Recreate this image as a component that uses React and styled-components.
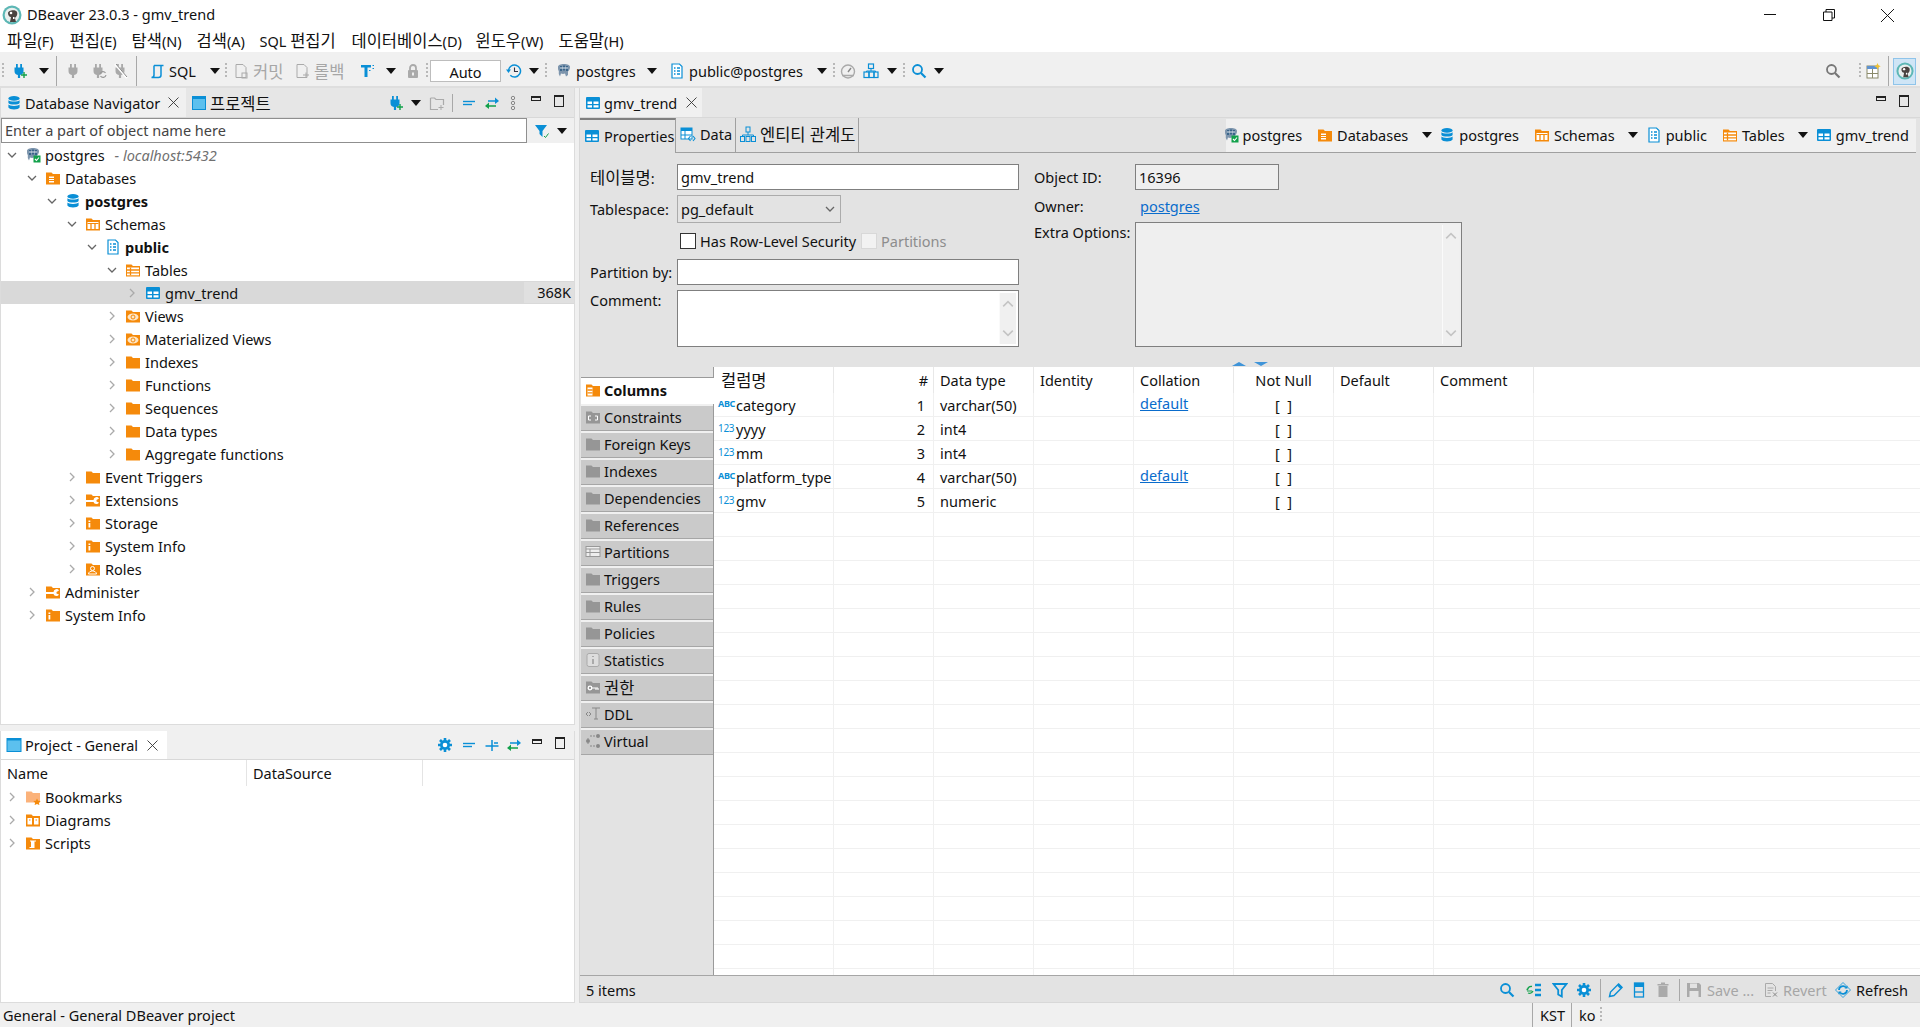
import React from "react";
import styled, { createGlobalStyle } from "styled-components";

const GlobalStyle = createGlobalStyle`
  html, body { margin: 0; padding: 0; background: #f0f0f0; }
  * { box-sizing: border-box; }
  body {
    font-family: "Noto Sans", "Noto Sans CJK KR", sans-serif;
    font-size: 14.5px;
    color: #111;
  }
`;

const BLUE = "#0a8fd6";
const ORANGE = "#f58a0b";
const GRAY = "#a9a9a9";
const GREEN = "#12a14b";

const folder = (c = ORANGE) => <path d="M1 2.5h5.5L8 4h7v10.5H1z" fill={c} />;

const stack = (c) => (
  <g fill={c}>
    <ellipse cx="8" cy="3.4" rx="5.6" ry="2.4" />
    <path d="M2.4 5.3c1 1.6 10.2 1.6 11.2 0v2.6c-1 2-10.2 2-11.2 0z" />
    <path d="M2.4 9.6c1 1.8 10.2 1.8 11.2 0v3c-1 2.6-10.2 2.6-11.2 0z" />
  </g>
);

const plug = (c) => (
  <g fill={c}>
    <rect x="4" y="1" width="1.8" height="4" />
    <rect x="8.2" y="1" width="1.8" height="4" />
    <path d="M2.5 4.5h9v3.5a4 4 0 0 1-3.4 4V15H5.9v-3a4 4 0 0 1-3.4-4z" />
  </g>
);

const elephant = (
  <g>
    <path d="M2 4c0-2 2.5-3 6-3s6 1 6 3-1 4-2 4.500V12l-2 1.500-1-3-2 .5-2-.5-1 3L2.800 11V8C2 7 2 5.500 2 4z" fill="#7d95ad" />
    <path d="M5 3v5M8 2.500v5M11 3v5" stroke="#25567f" strokeWidth="1.500" />
    <path d="M4 5h8" stroke="#e6edf3" strokeWidth="1" />
  </g>
);

const ICONS = {
  plugPlus: <>{plug(BLUE)}<path d="M12 9v6M9 12h6" stroke={GREEN} strokeWidth="1.4" /></>,
  grayPlug: plug(GRAY),
  recyclePlug: <>{plug(GRAY)}<path d="M9 11a3 3 0 0 1 5.500-1M15 12a3 3 0 0 1-5.500 1" stroke="#999" strokeWidth="1.200" fill="none" /></>,
  noPlug: <>{plug(GRAY)}<path d="M2 1l12 14" stroke="#fff" strokeWidth="2" /><path d="M3 1l11 13" stroke="#888" strokeWidth="1" /></>,
  sqlDoc: <path d="M5 2.500h9.500M12 2.500V12a2.500 2.500 0 0 1-2.500 2.500H2.500M5 2.500V12a2.500 2.500 0 0 1-2.500 2.500" stroke={BLUE} strokeWidth="1.500" fill="none" />,
  commit: <><path d="M3 1.500h7l3 3V14.500H3z" fill="none" stroke="#aaa" /><rect x="9" y="10" width="5" height="5" fill="none" stroke="#aaa" /></>,
  rollback: <><path d="M3 1.500h7l3 3V14.500H3z" fill="none" stroke="#aaa" /><path d="M9 12h6M12 9.500V15" stroke="#aaa" /></>,
  tType: <><path d="M1 2h10v2.500H7.500V14H4.500V4.500H1z" fill={BLUE} /><path d="M12.500 2.500h1.500M12.500 5.500h1.500M9 7.500h1.500" stroke={BLUE} strokeWidth="1.200" /></>,
  lock: <><path d="M5 7V5a3 3 0 0 1 6 0v2" fill="none" stroke="#aaa" strokeWidth="1.800" /><rect x="3" y="7" width="10" height="8" rx="1" fill="#aaa" /><rect x="7" y="9.500" width="2" height="3" fill="#eee" /></>,
  history: <><path d="M2.500 8a6 6 0 1 1 1.800 4.300" fill="none" stroke={BLUE} strokeWidth="1.500" /><path d="M0 6.500h5L2.500 10z" fill={BLUE} /><path d="M8.500 4.500V8.500H12" fill="none" stroke="#334" strokeWidth="1.100" /></>,
  pg: elephant,
  pgOk: <>{elephant}<rect x="8.500" y="8.500" width="7" height="7" fill={GREEN} /><path d="M10 12l1.500 1.500 2.500-3" stroke="#fff" strokeWidth="1.100" fill="none" /></>,
  doc: <><path d="M3 1h7.500L13 3.500V15H3z" fill="#fff" stroke={BLUE} strokeWidth="1.200" /><path d="M5 5h1.500M8 5h3M5 8h1.500M8 8h3M5 11h1.500M8 11h3" stroke={BLUE} strokeWidth="1.300" /></>,
  gauge: <><circle cx="8" cy="8.500" r="6.500" fill="none" stroke="#aaa" strokeWidth="1.400" /><path d="M8 9l3-4" stroke="#888" strokeWidth="1.400" /><path d="M2 12.500h12" stroke="#aaa" strokeWidth="1.500" /></>,
  dist: <><rect x="5.500" y="1" width="5" height="4.500" fill="none" stroke={BLUE} strokeWidth="1.200" /><path d="M8 5.500V8M3.500 9V8h9v1" fill="none" stroke={BLUE} /><rect x="1" y="9" width="5" height="5.500" fill="none" stroke={BLUE} strokeWidth="1.200" /><rect x="6" y="9" width="5" height="5.500" fill="none" stroke={BLUE} strokeWidth="1.200" /><rect x="11" y="9" width="4" height="5.500" fill="none" stroke={BLUE} strokeWidth="1.200" /></>,
  searchBlue: <><circle cx="6.500" cy="6.500" r="4.500" fill="none" stroke={BLUE} strokeWidth="1.800" /><path d="M10 10l4.500 4.500" stroke={BLUE} strokeWidth="2.200" /></>,
  searchGray: <><circle cx="6.500" cy="6.500" r="4.500" fill="none" stroke="#777" strokeWidth="1.800" /><path d="M10 10l4.500 4.500" stroke="#777" strokeWidth="2.200" /></>,
  perspective: <><rect x="2" y="3" width="11" height="12" fill="#fff" stroke="#8a8a6a" /><rect x="2" y="3" width="11" height="3" fill="#5f92cf" /><path d="M7.500 6v9M2 10.500h11" stroke="#8a8a6a" /><path d="M12.500 0l1 2.200 2.200 1-2.200 1-1 2.200-1-2.200-2.200-1 2.200-1z" fill="#f2c230" /></>,
  dbNav: stack(BLUE),
  folderPanel: <><rect x="1.500" y="1.500" width="13" height="13" fill="#5cc0ee" stroke={BLUE} /><rect x="1" y="1" width="14" height="3" fill={BLUE} /></>,
  projectTab: <><rect x="1" y="1.500" width="14" height="13" fill="#5cc0ee" stroke={BLUE} /><rect x="1" y="1" width="14" height="2.500" fill={BLUE} /></>,
  folderPlus: <><path d="M1.500 3h4L7 4.500h7.500V10M9 14.500H1.500V3" fill="none" stroke="#aaa" strokeWidth="1.200" /><path d="M12 10v5M9.500 12.500h5" stroke="#aaa" /></>,
  collapse: <><path d="M2 6.500h12" stroke={BLUE} strokeWidth="1.400" /><path d="M2 9.500h9" stroke={BLUE} strokeWidth="1.400" /></>,
  expand: <path d="M1.500 9h13M8 3v11M10 6h4" stroke={BLUE} strokeWidth="1.500" fill="none" />,
  linkArrows: <><path d="M4 6h8" stroke={BLUE} strokeWidth="1.500" /><path d="M11 2.500L15 6l-4 3z" fill={BLUE} /><path d="M5 11h7" stroke={GREEN} strokeWidth="1.500" /><path d="M5 7.500L1 11l4 3z" fill={GREEN} /></>,
  dots: <g fill="none" stroke="#888" strokeWidth="1"><circle cx="8" cy="3" r="1.700" /><circle cx="8" cy="8" r="1.700" /><circle cx="8" cy="13" r="1.700" /></g>,
  filterOk: <><path d="M1 2h12L8.500 8v6l-3-3V8z" fill={BLUE} /><path d="M10 13l1.500 1.500 3-4" stroke={GREEN} fill="none" /></>,
  filter: <path d="M1.500 2h13L9.800 8v6.500l-3.600-2V8z" fill="none" stroke={BLUE} strokeWidth="1.800" />,
  gear: <><circle cx="8" cy="8" r="5" fill={BLUE} /><path d="M8 1v14M1 8h14M3 3l10 10M13 3L3 13" stroke={BLUE} strokeWidth="2.600" /><circle cx="8" cy="8" r="2.300" fill="#fff" /></>,
  db: <>{folder()}<path d="M4 6.500h5v6H4z" fill="#fff" /><path d="M4 8.500h5M4 10.500h5" stroke={ORANGE} /></>,
  schemas: <>{folder()}<path d="M2.500 6h11v7h-11z" fill="#fff" /><path d="M2.500 7.500h11" stroke={ORANGE} /><path d="M6 7.500V13M10 7.500V13" stroke={ORANGE} strokeWidth="1.300" /></>,
  tables: <>{folder()}<path d="M2 5.500h12v7.800H2z" fill="#fff" /><path d="M2 8h12M2 10.800h12M5.500 5.500v7.800" stroke={ORANGE} strokeWidth="1.300" /></>,
  views: <>{folder()}<ellipse cx="8" cy="9" rx="5.500" ry="3.500" fill="#fde6c6" /><circle cx="8" cy="9" r="2" fill="none" stroke={ORANGE} /></>,
  plain: folder(),
  wrench: <>{folder()}<path d="M1 8h7.500a3 3 0 0 1 5.500-1.500L11.500 8v1.500l2.500 1A3 3 0 0 1 8.500 10H1z" fill="#fff" /></>,
  info: <>{folder()}<path d="M3.500 5.500h1.800v1.500H3.500zM3.500 8h1.800v4.500H3.500z" fill="#fff" /></>,
  roles: <>{folder()}<circle cx="7.500" cy="7.500" r="2" fill="none" stroke="#fff" /><path d="M3.500 13c0-4 8-4 8 0z" fill="none" stroke="#fff" /></>,
  bookmarks: <><path d="M1 2.500h5.500L8 4h7v9.500H1z" fill="#fbb27a" /><path d="M12 9.500l1.200 2.300 2.500.3-1.800 1.700.5 2.300-2.400-1.200-2.400 1.200.5-2.300-1.800-1.700 2.500-.3z" fill={ORANGE} /></>,
  diagrams: <>{folder()}<rect x="2.500" y="6" width="4.500" height="6.500" fill="#fff" /><rect x="9" y="6" width="4.500" height="6.500" fill="#fff" /><path d="M4 8h1.500M10.500 8H12" stroke={ORANGE} /></>,
  scripts: <>{folder()}<path d="M5 5.500h6v1H9.500V13H4.500v-1H6V6.500H5z" fill="#fff" /></>,
  table: <><rect x="1" y="2" width="14" height="12" rx="1" fill={BLUE} /><path d="M2.500 6.500h4.500v2.500H2.500zM8.500 6.500H13.500v2.500H8.500zM2.500 10.300h4.500v2.200H2.500zM8.500 10.300H13.500v2.200H8.500z" fill="#fff" /></>,
  dataTab: <><rect x="1" y="2" width="11" height="11" fill="#fff" stroke={BLUE} /><rect x="1" y="2" width="11" height="3" fill={BLUE} /><path d="M5 5v8M1 9h11" stroke={BLUE} /><path d="M10.500 10l-2 2.500 2 2.500M13 10l2 2.500-2 2.500" fill="none" stroke={BLUE} strokeWidth="1.100" /></>,
  erd: <><rect x="6" y="1" width="4" height="5" fill="none" stroke={BLUE} /><path d="M8 6v3M2.500 10.500V9h11v1.500" fill="none" stroke={BLUE} /><rect x=".500" y="10.500" width="4" height="5" fill="none" stroke={BLUE} /><rect x="6" y="10.500" width="4" height="5" fill="none" stroke={BLUE} /><rect x="11.500" y="10.500" width="4" height="5" fill="none" stroke={BLUE} /></>,
  columns: <>{folder()}<path d="M2.500 5.500h5v8h-5z" fill="#fff" /><path d="M2.500 8h5M2.500 10.800h5" stroke={ORANGE} strokeWidth="1.300" /></>,
  grayFolder: folder("#969696"),
  grayConstraint: <>{folder("#969696")}<path d="M6 7H3.500v4H6M10 7h2.500v4H10" fill="none" stroke="#fff" /></>,
  grayPartition: <><rect x="1" y="2.500" width="14" height="10" fill="#eee" stroke="#999" /><path d="M1 5h14M5 5v7.500M1 8.500h14" stroke="#999" /></>,
  stats: <><rect x="2" y="1.500" width="12" height="13" rx="2" fill="#ddd" stroke="#aaa" /><path d="M8 4v1M8 7v5" stroke="#999" strokeWidth="1.500" /></>,
  key: <>{folder("#969696")}<circle cx="5" cy="9" r="1.800" fill="none" stroke="#fff" strokeWidth="1.300" /><path d="M7 9h6M11 9v2M13 9v2" stroke="#fff" strokeWidth="1.100" /></>,
  ddl: <path d="M1 8l2-2M1 8l2 2M6 8L4 6M6 8l-2 2M7 2h8M11 2v11M9 13h4" stroke="#888" fill="none" />,
  virtual: <g fill="#888"><circle cx="13" cy="3" r="2" /><circle cx="13" cy="13" r="2" /><circle cx="3" cy="8" r="2" /><path d="M5 3h6M3 5v1M5 13h6M3 10v1" stroke="#888" strokeDasharray="2 1" /></g>,
  treeSync: <><path d="M9 3h6M9 8h6M9 13h6" stroke={BLUE} strokeWidth="2.400" /><path d="M6 4.500a4 4 0 0 0-4.500 3l-1 0M2 11a4 4 0 0 0 5-2" stroke={GREEN} strokeWidth="1.300" fill="none" /><path d="M1 9h5" stroke={GREEN} /></>,
  pencil: <><path d="M1.500 14.500l1-4.500 8-8 3.500 3.500-8 8z" fill="none" stroke={BLUE} strokeWidth="1.400" /><path d="M9 3.500L12.500 7l2-2L11 1.500z" fill={BLUE} /></>,
  rows: <><rect x="3.500" y="1" width="9" height="14" fill="none" stroke={BLUE} strokeWidth="1.300" /><rect x="3.500" y="1" width="9" height="4" fill={BLUE} /><path d="M3.500 10h9" stroke={BLUE} strokeWidth="1.300" /></>,
  trash: <><path d="M3.500 4h9v11h-9z" fill="#aaa" /><rect x="2.500" y="2" width="11" height="1.500" fill="#aaa" /><rect x="6" y=".500" width="4" height="1.500" fill="#aaa" /></>,
  save: <><path d="M1 1h12l2 2v12H1z" fill="#aaa" /><rect x="4" y="1.500" width="7" height="4.500" fill="#e3e3e3" /><rect x="3.500" y="9" width="9" height="6" fill="#e3e3e3" /></>,
  revert: <><path d="M2.500 1.500h7l3 3V9M8 14.500H2.500v-13" fill="none" stroke="#aaa" /><path d="M4.500 6h6M4.500 8.500h5M4.500 11h3" stroke="#aaa" /><path d="M10 10.500l4 4M14 10.500l-4 4" stroke="#888" /></>,
  refresh: <><path d="M8 .5L15.500 8 8 15.500.5 8z" fill="none" stroke={BLUE} strokeWidth=".8" /><path d="M4 8a4 4 0 0 1 7-2.500M12 8a4 4 0 0 1-7 2.500" fill="none" stroke={BLUE} strokeWidth="1.800" /><path d="M9.500 6.500h3v-3zM6.500 9.500h-3v3z" fill={BLUE} /></>,
};

const Svg = styled.svg`
  flex: none;
  display: block;
`;

const Icon = ({ name, size = 16 }) => (
  <Svg viewBox="0 0 16 16" width={size} height={size}>
    {ICONS[name]}
  </Svg>
);

const Beaver = ({ size = 20 }) => (
  <Svg viewBox="0 0 20 20" width={size} height={size}>
    <circle cx="10" cy="10" r="9.500" fill="#5db7b5" />
    <circle cx="10" cy="10" r="7.300" fill="#e9efee" />
    <path d="M6 8c0-3 8-4 9-1 1 3-1 5-2 6l1 4H8l1-5C7 12 6 10 6 8z" fill="#4a4340" />
    <circle cx="9" cy="8" r="1.300" fill="#fff" />
    <path d="M11 12l1.500 0v2h-1.500z" fill="#fff" />
  </Svg>
);

const CHEVRON_POINTS = {
  down: "1,3 5,7 9,3",
  up: "1,7 5,3 9,7",
  right: "3,1 7,5 3,9",
};

const Chevron = ({ dir, color, size = 10 }) => (
  <Svg viewBox="0 0 10 10" width={size} height={size}>
    <polyline
      points={CHEVRON_POINTS[dir]}
      fill="none"
      stroke={color || (dir === "down" ? "#666" : "#aaa")}
      strokeWidth="1.300"
    />
  </Svg>
);

const CloseX = () => (
  <Svg viewBox="0 0 11 11" width={11} height={11}>
    <path d="M.5.5l10 10M10.500.5l-10 10" stroke="#333" strokeWidth=".9" />
  </Svg>
);

const Page = styled.div`
  width: 1920px;
  height: 1027px;
  display: flex;
  flex-direction: column;
  overflow: hidden;
  background: #f0f0f0;
`;

const Ko = styled.span`
  font-size: 16.5px;
`;

const TitleBar = styled.div`
  height: 30px;
  background: #fff;
  display: flex;
  align-items: center;
  padding: 0 3px 0 2px;
`;

const TitleText = styled.div`
  margin-left: 5px;
  padding-bottom: 2px;
  flex: 1;
  white-space: pre;
`;

const WinButton = styled.div`
  width: 59px;
  height: 30px;
  display: flex;
  align-items: center;
  justify-content: center;
`;

const MenuBar = styled.div`
  height: 22px;
  background: #fff;
  display: flex;
  align-items: center;
  padding: 0 0 2px 7px;
  white-space: nowrap;
`;

const MenuItem = styled.span`
  flex: none;
  width: ${(p) => p.$w}px;
`;

const Toolbar = styled.div`
  height: 36px;
  display: flex;
  align-items: center;
  border-bottom: 2px solid #dedede;
  padding: 4px 4px 0 0;
  white-space: nowrap;
`;

const Slot = styled.div`
  flex: none;
  width: ${(p) => p.$w}px;
  height: 100%;
  display: flex;
  align-items: center;
  justify-content: center;
`;

const TextItem = styled.div`
  flex: none;
  width: ${(p) => p.$w}px;
  padding-left: ${(p) => p.$pad || 0}px;
  display: flex;
  align-items: center;
  gap: ${(p) => p.$gap ?? 4}px;
  color: ${(p) => (p.$off ? "#a6a6a6" : "#111")};
`;

const Spacer = styled.div`
  flex: 1;
`;

const ArrowDown = styled.span`
  width: 0;
  height: 0;
  border-left: 5px solid transparent;
  border-right: 5px solid transparent;
  border-top: 6px solid #111;
`;

const Sep = styled.div`
  width: 1px;
  height: ${(p) => p.$h || 30}px;
  background: #a8a8a8;
`;

const Grip = styled.div`
  width: 2px;
  height: 16px;
  background: repeating-linear-gradient(to bottom, #b8b8b8 0 2px, transparent 2px 4px);
`;

const AutoBox = styled.div`
  flex: none;
  width: 71px;
  height: 22px;
  background: #fff;
  border: 1px solid #bdbdbd;
  text-align: center;
  line-height: 22px;
`;

const PerspectiveButton = styled.div`
  width: 23px;
  height: 27px;
  flex: none;
  display: flex;
  align-items: center;
  justify-content: center;
  background: #cfe5f6;
  border: 1px solid #8fc4ea;
`;

const Main = styled.div`
  flex: 1;
  min-height: 0;
  display: flex;
`;

const LeftColumn = styled.div`
  width: 575px;
  display: flex;
  flex-direction: column;
  gap: 6px;
`;

const Panel = styled.div`
  flex: ${(p) => (p.$h ? `0 0 ${p.$h}px` : 1)};
  min-height: 0;
  display: flex;
  flex-direction: column;
  background: #fff;
  border: 1px solid #dcdcdc;
  border-top: 0;
`;

const PanelTabs = styled.div`
  height: ${(p) => p.$h}px;
  flex: none;
  display: flex;
  align-items: stretch;
  background: ${(p) => p.$bg};
  border-bottom: 1px solid #d8d8d8;
`;

const PanelTab = styled.div`
  width: ${(p) => p.$w}px;
  flex: none;
  display: flex;
  align-items: center;
  padding-left: 5px;
  gap: 3px;
  background: ${(p) => p.$bg || "transparent"};
  white-space: nowrap;
`;

const TabClose = styled.span`
  display: flex;
  margin-left: ${(p) => p.$ml}px;
`;

const MinIcon = styled.span`
  width: 10px;
  height: 5px;
  border: 1px solid #222;
  border-top-width: 2px;
  margin-top: -8px;
`;

const MaxIcon = styled.span`
  width: 10px;
  height: 12px;
  border: 1px solid #222;
  border-top-width: 2px;
  margin-top: -4px;
`;

const FilterRow = styled.div`
  height: 25px;
  flex: none;
  display: flex;
  background: #f0f0f0;
`;

const FilterInput = styled.div`
  width: 526px;
  flex: none;
  background: #fff;
  border: 1px solid #8f8f8f;
  padding-left: 3px;
  line-height: 23px;
  color: #444;
`;

const TreeBody = styled.div`
  flex: 1;
  overflow: hidden;
`;

const TreeRow = styled.div`
  height: 23px;
  display: flex;
  align-items: center;
  padding-left: ${(p) => p.$depth * 20 + 6}px;
  white-space: nowrap;
  background: ${(p) => (p.$selected ? "#d9d9d9" : "transparent")};
  font-weight: ${(p) => (p.$bold ? 700 : 400)};
`;

const Twist = styled.span`
  width: 11px;
  margin-right: 7px;
  display: flex;
  flex: none;
`;

const RowLabel = styled.span`
  margin-left: 4px;
`;

const Hint = styled.span`
  margin-left: 10px;
  font-style: italic;
  color: #707070;
`;

const SizeCell = styled.span`
  margin-left: auto;
  width: 50px;
  height: 21px;
  line-height: 21px;
  text-align: right;
  padding-right: 3px;
  background: #e0e0e0;
`;

const ProjectHead = styled.div`
  height: 25px;
  flex: none;
  display: grid;
  grid-template-columns: 246px 176px;
`;

const ProjectCol = styled.div`
  border-right: 1px solid #e4e4e4;
  padding-left: 6px;
  line-height: 26px;
`;

const Editor = styled.div`
  width: 1341px;
  margin-left: 4px;
  display: flex;
  flex-direction: column;
  background: #e3e3e3;
  border-left: 1px solid #d8d8d8;
  border-bottom: 1px solid #d8d8d8;
`;

const SubBar = styled.div`
  height: 35px;
  flex: none;
  display: flex;
  justify-content: space-between;
`;

const SubTabs = styled.div`
  display: flex;
  flex: 1;
  border-bottom: 1px solid #a0a0a0;
`;

const SubTab = styled.div`
  width: ${(p) => p.$w}px;
  flex: none;
  display: flex;
  align-items: center;
  gap: 4px;
  padding: 0 0 2px 4px;
  white-space: nowrap;
  border-right: 1px solid #a0a0a0;
  ${(p) =>
    p.$active
      ? "border-top: 2px solid #808080; margin-bottom: -1px; background: #e3e3e3;"
      : ""}
`;

const Crumbs = styled.div`
  flex: none;
  width: 690px;
  margin-right: 4px;
  margin-top: 1px;
  display: flex;
  align-items: center;
  justify-content: flex-end;
  padding: 0 7px 2px 0;
  background: #f0f0f0;
  border-bottom: 1px solid #a0a0a0;
  white-space: nowrap;
`;

const Crumb = styled.div`
  flex: none;
  display: flex;
  align-items: center;
  gap: 4px;
  margin-left: ${(p) => p.$ml ?? 15}px;
`;

const CrumbArrow = styled.div`
  flex: none;
  width: 25px;
  margin-left: 6px;
  display: flex;
  justify-content: center;
`;

const Form = styled.div`
  height: 214px;
  flex: none;
  padding-top: 11px;
  display: flex;
  flex-direction: column;
`;

const FormColumns = styled.div`
  display: flex;
  height: 183px;
`;

const FormLeft = styled.div`
  width: 454px;
  flex: none;
  padding-left: 10px;
`;

const FormRight = styled.div`
  flex: 1;
`;

const FormRow = styled.div`
  display: flex;
  align-items: ${(p) => (p.$top ? "flex-start" : "center")};
  height: ${(p) => p.$h}px;
  margin-bottom: ${(p) => p.$mb || 0}px;
`;

const Label = styled.div`
  width: ${(p) => p.$w}px;
  flex: none;
  white-space: nowrap;
`;

const Field = styled.div`
  width: ${(p) => p.$w}px;
  height: 100%;
  flex: none;
  background: ${(p) => p.$bg || "#fff"};
  border: 1px solid #7f7f7f;
  padding-left: 3px;
  line-height: 24px;
`;

const SelectBox = styled(Field)`
  display: flex;
  align-items: center;
  justify-content: space-between;
  padding-right: 5px;
  background: #e3e3e3;
  border-color: #ababab;
`;

const AreaField = styled.div`
  width: ${(p) => p.$w}px;
  height: 100%;
  flex: none;
  display: flex;
  justify-content: flex-end;
  background: ${(p) => p.$bg || "#fff"};
  border: 1px solid #7f7f7f;
  padding: 2px;
`;

const ScrollTrack = styled.div`
  width: 17px;
  display: flex;
  flex-direction: column;
  justify-content: space-between;
  align-items: center;
  padding: 5px 0;
  background: #f0f0f0;
  border-left: 1px solid #fafafa;
`;

const ChecksCell = styled.div`
  display: flex;
  align-items: center;
  padding-left: 90px;
  white-space: nowrap;
`;

const Check = styled.span`
  width: 16px;
  height: 16px;
  background: ${(p) => (p.$off ? "#f2f2f2" : "#fff")};
  border: 1px solid ${(p) => (p.$off ? "#d8d8d8" : "#333")};
  margin-right: 4px;
`;

const CheckLabel = styled.span`
  width: ${(p) => p.$w}px;
  color: ${(p) => (p.$off ? "#8d8d8d" : "#111")};
`;

const FormLink = styled.a`
  margin-left: 5px;
  color: #0a6ccc;
  text-decoration: underline;
`;

const SashSpacer = styled.div`
  height: 11px;
  flex: none;
`;

const SashRow = styled.div`
  display: flex;
  align-items: flex-end;
  height: 9px;
  padding-left: 652px;
  gap: 8px;
`;

const SashUp = styled.span`
  width: 0;
  border-left: 7px solid transparent;
  border-right: 7px solid transparent;
  border-bottom: 4px solid #3f94d8;
  margin-bottom: 1px;
`;

const SashDown = styled(SashUp)`
  border-bottom: 0;
  border-top: 4px solid #3f94d8;
`;

const Detail = styled.div`
  flex: 1;
  min-height: 0;
  display: flex;
`;

const SideTabs = styled.div`
  width: 134px;
  flex: none;
  padding: 10px 0 0 1px;
  border-right: 1px solid #9a9a9a;
`;

const SideTab = styled.div`
  height: 27px;
  display: flex;
  align-items: center;
  gap: 3px;
  padding: 0 0 2px 4px;
  background: ${(p) => (p.$active ? "#fff" : "#cacaca")};
  font-weight: ${(p) => (p.$active ? 700 : 400)};
  border-top: ${(p) => (p.$active ? "1px solid #9a9a9a" : "2px solid #f0f0f0")};
  border-bottom: ${(p) => (p.$active ? "0" : "1px solid #a6a6a6")};
  margin-right: ${(p) => (p.$active ? "-1px" : 0)};
  position: relative;
`;

const GridArea = styled.div`
  flex: 1;
  min-width: 0;
  background: #fff;
  overflow: hidden;
`;

const GridRow = styled.div`
  display: grid;
  grid-template-columns: 120px repeat(7, 100px) 1fr;
  height: ${(p) => (p.$head ? 26 : 24)}px;
  border-bottom: ${(p) => (p.$head ? "0" : "1px solid #f0f0f0")};
`;

const GridCell = styled.div`
  display: flex;
  align-items: center;
  gap: ${(p) => p.$gap || 0}px;
  padding-left: ${(p) => p.$pl ?? 6}px;
  padding-right: ${(p) => p.$pr ?? 0}px;
  justify-content: ${(p) => p.$align || "flex-start"};
  border-right: ${(p) => (p.$last ? "0" : p.$head ? "1px solid #e8e8e8" : "1px solid #f0f0f0")};
  white-space: pre;
  overflow: hidden;
`;

const TypeBadge = styled.span`
  width: 17px;
  flex: none;
  color: ${BLUE};
  font-size: ${(p) => (p.$abc ? 9 : 10)}px;
  font-weight: ${(p) => (p.$abc ? 700 : 400)};
  letter-spacing: -0.3px;
  line-height: 10px;
  margin-top: -2px;
`;

const CellLink = styled.a`
  color: #0a6ccc;
  text-decoration: underline;
  margin-top: -4px;
`;

const BottomBar = styled.div`
  height: 27px;
  flex: none;
  display: flex;
  align-items: center;
  padding: 1px 15px 0 6px;
  border-top: 1px solid #a6a6a6;
  white-space: nowrap;
`;

const StatusBar = styled.div`
  height: 24px;
  flex: none;
  display: flex;
  align-items: center;
  padding-left: 3px;
  white-space: nowrap;
`;

const StatusCell = styled.div`
  width: ${(p) => p.$w}px;
  height: 100%;
  border-left: 1px solid #a8a8a8;
  padding-left: ${(p) => p.$pl}px;
  line-height: 24px;
`;

const treeRows = [
  { depth: 0, open: true, icon: "pgOk", label: "postgres", hint: "- localhost:5432" },
  { depth: 1, open: true, icon: "db", label: "Databases" },
  { depth: 2, open: true, icon: "dbNav", label: "postgres", bold: true },
  { depth: 3, open: true, icon: "schemas", label: "Schemas" },
  { depth: 4, open: true, icon: "doc", label: "public", bold: true },
  { depth: 5, open: true, icon: "tables", label: "Tables" },
  { depth: 6, icon: "table", label: "gmv_trend", selected: true, size: "368K" },
  { depth: 5, icon: "views", label: "Views" },
  { depth: 5, icon: "views", label: "Materialized Views" },
  { depth: 5, icon: "plain", label: "Indexes" },
  { depth: 5, icon: "plain", label: "Functions" },
  { depth: 5, icon: "plain", label: "Sequences" },
  { depth: 5, icon: "plain", label: "Data types" },
  { depth: 5, icon: "plain", label: "Aggregate functions" },
  { depth: 3, icon: "plain", label: "Event Triggers" },
  { depth: 3, icon: "wrench", label: "Extensions" },
  { depth: 3, icon: "info", label: "Storage" },
  { depth: 3, icon: "info", label: "System Info" },
  { depth: 3, icon: "roles", label: "Roles" },
  { depth: 1, icon: "wrench", label: "Administer" },
  { depth: 1, icon: "info", label: "System Info" },
];

const projectRows = [
  { icon: "bookmarks", label: "Bookmarks" },
  { icon: "diagrams", label: "Diagrams" },
  { icon: "scripts", label: "Scripts" },
];

const menuItems = [
  { ko: "파일", tail: "(F)", w: 62.5 },
  { ko: "편집", tail: "(E)", w: 62 },
  { ko: "탐색", tail: "(N)", w: 65 },
  { ko: "검색", tail: "(A)", w: 63 },
  { head: "SQL ", ko: "편집기", w: 92 },
  { ko: "데이터베이스", tail: "(D)", w: 124 },
  { ko: "윈도우", tail: "(W)", w: 83 },
  { ko: "도움말", tail: "(H)", w: 80 },
];

const sideTabs = [
  ["columns", "Columns"],
  ["grayConstraint", "Constraints"],
  ["grayFolder", "Foreign Keys"],
  ["grayFolder", "Indexes"],
  ["grayFolder", "Dependencies"],
  ["grayFolder", "References"],
  ["grayPartition", "Partitions"],
  ["grayFolder", "Triggers"],
  ["grayFolder", "Rules"],
  ["grayFolder", "Policies"],
  ["stats", "Statistics"],
  ["key", <Ko key="ko">권한</Ko>],
  ["ddl", "DDL"],
  ["virtual", "Virtual"],
];

const columns = [
  { name: "category", abc: true, type: "varchar(50)", link: true },
  { name: "yyyy", type: "int4" },
  { name: "mm", type: "int4" },
  { name: "platform_type", abc: true, type: "varchar(50)", link: true },
  { name: "gmv", type: "numeric" },
];

const EMPTY_ROWS = 20;

function TreeItem({ row }) {
  return (
    <TreeRow $depth={row.depth} $selected={row.selected} $bold={row.bold}>
      <Twist>
        <Chevron dir={row.open ? "down" : "right"} />
      </Twist>
      <Icon name={row.icon} />
      <RowLabel>{row.label}</RowLabel>
      {row.hint && <Hint>{row.hint}</Hint>}
      {row.size && <SizeCell>{row.size}</SizeCell>}
    </TreeRow>
  );
}

function MainToolbar() {
  return (
    <Toolbar>
      <Slot $w={6}><Grip /></Slot>
      <Slot $w={28}><Icon name="plugPlus" /></Slot>
      <Slot $w={20}><ArrowDown /></Slot>
      <Slot $w={4}><Sep /></Slot>
      <Slot $w={32}><Icon name="grayPlug" /></Slot>
      <Slot $w={18}><Icon name="recyclePlug" /></Slot>
      <Slot $w={26}><Icon name="noPlug" /></Slot>
      <Slot $w={4}><Sep /></Slot>
      <TextItem $w={67} $pad={11}><Icon name="sqlDoc" />SQL</TextItem>
      <Slot $w={19}><ArrowDown /></Slot>
      <Slot $w={4}><Grip /></Slot>
      <TextItem $w={66} $pad={5} $off><Icon name="commit" /><Ko>커밋</Ko></TextItem>
      <TextItem $w={62} $off><Icon name="rollback" /><Ko>롤백</Ko></TextItem>
      <Slot $w={24}><Icon name="tType" /></Slot>
      <Slot $w={22}><ArrowDown /></Slot>
      <Slot $w={22}><Icon name="lock" /></Slot>
      <Slot $w={6}><Grip /></Slot>
      <AutoBox>Auto</AutoBox>
      <Slot $w={26}><Icon name="history" /></Slot>
      <Slot $w={14}><ArrowDown /></Slot>
      <Slot $w={10}><Grip /></Slot>
      <TextItem $w={91} $pad={5}><Icon name="pg" />postgres</TextItem>
      <Slot $w={20}><ArrowDown /></Slot>
      <TextItem $w={150} $pad={7}><Icon name="doc" />public@postgres</TextItem>
      <Slot $w={20}><ArrowDown /></Slot>
      <Slot $w={4}><Grip /></Slot>
      <Slot $w={24}><Icon name="gauge" /></Slot>
      <Slot $w={22}><Icon name="dist" /></Slot>
      <Slot $w={20}><ArrowDown /></Slot>
      <Slot $w={4}><Grip /></Slot>
      <Slot $w={26}><Icon name="searchBlue" /></Slot>
      <Slot $w={14}><ArrowDown /></Slot>
      <Spacer />
      <Slot $w={24}><Icon name="searchGray" /></Slot>
      <Slot $w={12} />
      <Slot $w={6}><Grip /></Slot>
      <Slot $w={20}><Icon name="perspective" /></Slot>
      <Slot $w={10}><Sep /></Slot>
      <PerspectiveButton><Beaver size={18} /></PerspectiveButton>
    </Toolbar>
  );
}

function App() {
  return (
    <Page>
      <GlobalStyle />
      <TitleBar>
        <Beaver />
        <TitleText>DBeaver 23.0.3 - gmv_trend</TitleText>
        <WinButton>
          <Svg viewBox="0 0 12 12" width={12} height={12}><path d="M0 5.500h12" stroke="#111" /></Svg>
        </WinButton>
        <WinButton>
          <Svg viewBox="0 0 12 12" width={12} height={12}><path d="M.5 3h8.500v8.500H.5zM3 3V.5h8.500V9H9" fill="none" stroke="#111" /></Svg>
        </WinButton>
        <WinButton>
          <Svg viewBox="0 0 12 12" width={13} height={13}><path d="M0 0l12 12M12 0L0 12" stroke="#111" strokeWidth=".9" /></Svg>
        </WinButton>
      </TitleBar>

      <MenuBar>
        {menuItems.map((m) => (
          <MenuItem key={m.ko} $w={m.w}>
            {m.head}
            <Ko>{m.ko}</Ko>
            {m.tail}
          </MenuItem>
        ))}
      </MenuBar>

      <MainToolbar />

      <Main>
        <LeftColumn>
          <Panel $h={637}>
            <PanelTabs $h={30} $bg="#e6e6e6">
              <PanelTab $w={185} $bg="#f0f0f0">
                <Icon name="dbNav" />
                Database Navigator
                <TabClose $ml={5}><CloseX /></TabClose>
              </PanelTab>
              <PanelTab $w={200}>
                <Icon name="folderPanel" />
                <Ko>프로젝트</Ko>
              </PanelTab>
              <Slot $w={20}><Icon name="plugPlus" /></Slot>
              <Slot $w={20}><ArrowDown /></Slot>
              <Slot $w={22}><Icon name="folderPlus" /></Slot>
              <Slot $w={8}><Sep $h={18} /></Slot>
              <Slot $w={26}><Icon name="collapse" /></Slot>
              <Slot $w={20}><Icon name="linkArrows" /></Slot>
              <Slot $w={22}><Icon name="dots" /></Slot>
              <Slot $w={24}><MinIcon /></Slot>
              <Slot $w={22}><MaxIcon /></Slot>
            </PanelTabs>
            <FilterRow>
              <FilterInput>Enter a part of object name here</FilterInput>
              <Slot $w={30}><Icon name="filterOk" /></Slot>
              <Slot $w={10}><ArrowDown /></Slot>
            </FilterRow>
            <TreeBody>
              {treeRows.map((r, i) => (
                <TreeItem key={i} row={r} />
              ))}
            </TreeBody>
          </Panel>

          <Panel>
            <PanelTabs $h={29} $bg="#f0f0f0">
              <PanelTab $w={166} $bg="#fff">
                <Icon name="projectTab" />
                Project - General
                <TabClose $ml={6}><CloseX /></TabClose>
              </PanelTab>
              <Spacer />
              <Slot $w={24}><Icon name="gear" /></Slot>
              <Slot $w={24}><Icon name="collapse" /></Slot>
              <Slot $w={22}><Icon name="expand" /></Slot>
              <Slot $w={22}><Icon name="linkArrows" /></Slot>
              <Slot $w={24}><MinIcon /></Slot>
              <Slot $w={22}><MaxIcon /></Slot>
              <Slot $w={3} />
            </PanelTabs>
            <ProjectHead>
              <ProjectCol>Name</ProjectCol>
              <ProjectCol>DataSource</ProjectCol>
            </ProjectHead>
            {projectRows.map((r) => (
              <TreeRow key={r.label} $depth={0}>
                <Twist>
                  <Chevron dir="right" />
                </Twist>
                <Icon name={r.icon} />
                <RowLabel>{r.label}</RowLabel>
              </TreeRow>
            ))}
          </Panel>
        </LeftColumn>

        <Editor>
          <PanelTabs $h={30} $bg="#e6e6e6">
            <PanelTab $w={122} $bg="#f0f0f0">
              <Icon name="table" />
              gmv_trend
              <TabClose $ml={6}><CloseX /></TabClose>
            </PanelTab>
            <Spacer />
            <Slot $w={23}><MinIcon /></Slot>
            <Slot $w={23}><MaxIcon /></Slot>
            <Slot $w={5} />
          </PanelTabs>

          <SubBar>
            <SubTabs>
              <SubTab $w={96} $active><Icon name="table" />Properties</SubTab>
              <SubTab $w={60}><Icon name="dataTab" />Data</SubTab>
              <SubTab $w={123}><Icon name="erd" /><Ko>엔티티 관계도</Ko></SubTab>
            </SubTabs>
            <Crumbs>
              <Crumb $ml={0}><Icon name="pgOk" />postgres</Crumb>
              <Crumb><Icon name="db" />Databases</Crumb>
              <CrumbArrow><ArrowDown /></CrumbArrow>
              <Crumb $ml={0}><Icon name="dbNav" />postgres</Crumb>
              <Crumb><Icon name="schemas" />Schemas</Crumb>
              <CrumbArrow><ArrowDown /></CrumbArrow>
              <Crumb $ml={0}><Icon name="doc" />public</Crumb>
              <Crumb><Icon name="tables" />Tables</Crumb>
              <CrumbArrow><ArrowDown /></CrumbArrow>
              <Crumb $ml={0}><Icon name="table" />gmv_trend</Crumb>
            </Crumbs>
          </SubBar>

          <Form>
            <FormColumns>
              <FormLeft>
                <FormRow $h={26} $mb={5}>
                  <Label $w={87}><Ko>테이블명</Ko>:</Label>
                  <Field $w={342}>gmv_trend</Field>
                </FormRow>
                <FormRow $h={28}>
                  <Label $w={87}>Tablespace:</Label>
                  <SelectBox $w={164}>pg_default<Chevron dir="down" /></SelectBox>
                </FormRow>
                <FormRow $h={36}>
                  <ChecksCell>
                    <Check />
                    <CheckLabel $w={161}>Has Row-Level Security</CheckLabel>
                    <Check $off />
                    <CheckLabel $off>Partitions</CheckLabel>
                  </ChecksCell>
                </FormRow>
                <FormRow $h={26} $mb={5}>
                  <Label $w={87}>Partition by:</Label>
                  <Field $w={342} />
                </FormRow>
                <FormRow $h={57} $top>
                  <Label $w={87}>Comment:</Label>
                  <AreaField $w={342}>
                    <ScrollTrack>
                      <Chevron dir="up" color="#c4c4c4" size={12} />
                      <Chevron dir="down" color="#c4c4c4" size={12} />
                    </ScrollTrack>
                  </AreaField>
                </FormRow>
              </FormLeft>
              <FormRight>
                <FormRow $h={26}>
                  <Label $w={101}>Object ID:</Label>
                  <Field $w={144} $bg="#efefef">16396</Field>
                </FormRow>
                <FormRow $h={32}>
                  <Label $w={101}>Owner:</Label>
                  <FormLink>postgres</FormLink>
                </FormRow>
                <FormRow $h={125} $top>
                  <Label $w={101}>Extra Options:</Label>
                  <AreaField $w={327} $bg="#efefef">
                    <ScrollTrack>
                      <Chevron dir="up" color="#c4c4c4" size={12} />
                      <Chevron dir="down" color="#c4c4c4" size={12} />
                    </ScrollTrack>
                  </AreaField>
                </FormRow>
              </FormRight>
            </FormColumns>
            <SashSpacer />
            <SashRow>
              <SashUp />
              <SashDown />
            </SashRow>
          </Form>

          <Detail>
            <SideTabs>
              {sideTabs.map(([icon, label], i) => (
                <SideTab key={icon + i} $active={i === 0}>
                  <Icon name={icon} />
                  {label}
                </SideTab>
              ))}
            </SideTabs>
            <GridArea>
              <GridRow $head>
                <GridCell $head $pl={7}><Ko>컬럼명</Ko></GridCell>
                <GridCell $head $align="flex-end" $pr={5}>#</GridCell>
                {["Data type", "Identity", "Collation"].map((h) => (
                  <GridCell $head key={h}>{h}</GridCell>
                ))}
                <GridCell $head $pl={0} $align="center">Not Null</GridCell>
                {["Default", "Comment"].map((h) => (
                  <GridCell $head key={h}>{h}</GridCell>
                ))}
                <GridCell $last />
              </GridRow>
              {columns.map((c, i) => (
                <GridRow key={c.name}>
                  <GridCell $pl={4} $gap={1}>
                    <TypeBadge $abc={c.abc}>{c.abc ? "ABC" : "123"}</TypeBadge>
                    {c.name}
                  </GridCell>
                  <GridCell $align="flex-end" $pr={8}>{i + 1}</GridCell>
                  <GridCell>{c.type}</GridCell>
                  <GridCell />
                  <GridCell>{c.link && <CellLink>default</CellLink>}</GridCell>
                  <GridCell $pl={0} $align="center">{"[  ]"}</GridCell>
                  <GridCell />
                  <GridCell />
                  <GridCell $last />
                </GridRow>
              ))}
              {Array.from({ length: EMPTY_ROWS }, (_, i) => (
                <GridRow key={i}>
                  {Array.from({ length: 8 }, (_, j) => (
                    <GridCell key={j} />
                  ))}
                  <GridCell $last />
                </GridRow>
              ))}
            </GridArea>
          </Detail>

          <BottomBar>
            5 items
            <Spacer />
            <Slot $w={24}><Icon name="searchBlue" /></Slot>
            <Slot $w={30}><Icon name="treeSync" /></Slot>
            <Slot $w={22}><Icon name="filter" /></Slot>
            <Slot $w={26}><Icon name="gear" /></Slot>
            <Slot $w={6}><Sep $h={22} /></Slot>
            <Slot $w={26}><Icon name="pencil" /></Slot>
            <Slot $w={20}><Icon name="rows" /></Slot>
            <Slot $w={28}><Icon name="trash" /></Slot>
            <Slot $w={4}><Sep $h={22} /></Slot>
            <TextItem $w={82} $pad={5} $gap={5} $off><Icon name="save" />Save ...</TextItem>
            <TextItem $w={72} $gap={4} $off><Icon name="revert" />Revert</TextItem>
            <TextItem $w={70} $gap={5}><Icon name="refresh" />Refresh</TextItem>
          </BottomBar>
        </Editor>
      </Main>

      <StatusBar>
        General - General DBeaver project
        <Spacer />
        <StatusCell $w={39} $pl={7}>KST</StatusCell>
        <StatusCell $w={29} $pl={7}>ko</StatusCell>
        <Slot $w={2}><Grip /></Slot>
        <Slot $w={318} />
      </StatusBar>
    </Page>
  );
}

export default App;
